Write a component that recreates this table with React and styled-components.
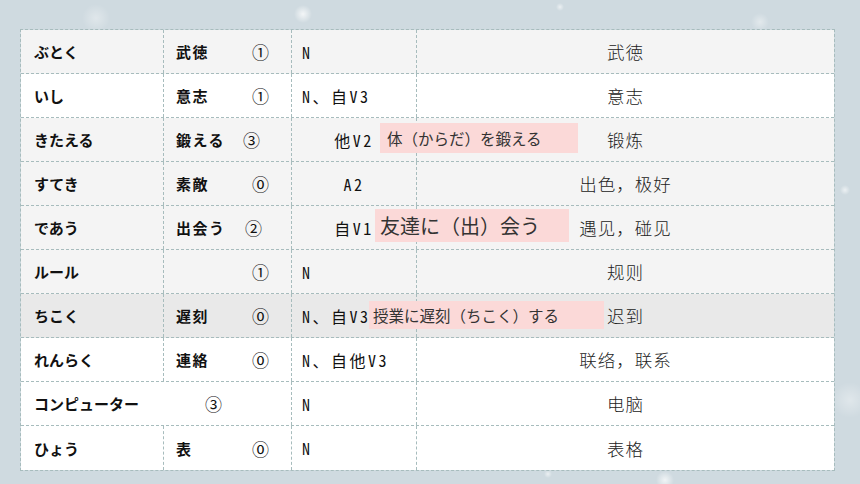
import styled, { createGlobalStyle } from "styled-components";

const GlobalStyle = createGlobalStyle`
  html, body {
    margin: 0;
    padding: 0;
  }
  body {
    width: 860px;
    height: 484px;
    overflow: hidden;
    background-color: #cfdae0;
    background-image:
      radial-gradient(circle at 303px 14px, rgba(255,255,255,0.75) 0, rgba(255,255,255,0) 9px),
      radial-gradient(circle at 96px 18px, rgba(255,255,255,0.35) 0, rgba(255,255,255,0) 14px),
      radial-gradient(circle at 560px 7px, rgba(255,255,255,0.6) 0, rgba(255,255,255,0) 4px),
      radial-gradient(circle at 760px 22px, rgba(255,255,255,0.4) 0, rgba(255,255,255,0) 9px),
      radial-gradient(circle at 665px 480px, rgba(255,255,255,0.7) 0, rgba(255,255,255,0) 9px),
      radial-gradient(circle at 548px 474px, rgba(255,255,255,0.6) 0, rgba(255,255,255,0) 4px),
      radial-gradient(circle at 850px 400px, rgba(255,255,255,0.35) 0, rgba(255,255,255,0) 18px),
      radial-gradient(circle at 845px 190px, rgba(255,255,255,0.6) 0, rgba(255,255,255,0) 5px);
  }
`;

const rows = [
  { kana: "ぶとく", word: "武徳", accent: "①", pos: "N", meaning: "武徳", bg: "#f4f4f4" },
  { kana: "いし", word: "意志", accent: "①", pos: "N、自V3", meaning: "意志", bg: "#ffffff" },
  {
    kana: "きたえる", word: "鍛える", wordW: 67, accent: "③", pos: "他V2", center: true,
    meaning: "锻炼", bg: "#f4f4f4",
    note: { text: "体（からだ）を鍛える", left: 359, top: 5, w: 198, h: 30, size: 15.5, pad: 7 },
  },
  { kana: "すてき", word: "素敵", accent: "⓪", pos: "A2", center: true, meaning: "出色，极好", bg: "#f4f4f4" },
  {
    kana: "であう", word: "出会う", wordW: 69, accent: "②", pos: "自V1", center: true,
    meaning: "遇见，碰见", bg: "#f4f4f4",
    note: { text: "友達に（出）会う", left: 354, top: 3, w: 194, h: 33, size: 20, pad: 5 },
  },
  { kana: "ルール", word: "", accent: "①", pos: "N", meaning: "规则", bg: "#f4f4f4" },
  {
    kana: "ちこく", word: "遅刻", accent: "⓪", pos: "N、自V3", meaning: "迟到", bg: "#e9e9e9",
    note: { text: "授業に遅刻（ちこく）する", left: 348, top: 7, w: 235, h: 28, size: 15.5, pad: 4 },
  },
  { kana: "れんらく", word: "連絡", accent: "⓪", pos: "N、自他V3", meaning: "联络，联系", bg: "#ffffff" },
  { kana: "コンピューター", span: true, accent: "③", pos: "N", meaning: "电脑", bg: "#ffffff" },
  { kana: "ひょう", word: "表", accent: "⓪", pos: "N", meaning: "表格", bg: "#ffffff" },
];

const App = () => {
  return (
    <>
      <GlobalStyle />
      <Page>
        <Table>
          {rows.map((r, i) => (
            <Row key={i} $bg={r.bg} $last={i === rows.length - 1}>
              {r.span ? (
                <Cell $span={2}>
                  <Kana $w={171}>{r.kana}</Kana>
                  <Accent>{r.accent}</Accent>
                </Cell>
              ) : (
                <>
                  <Cell>
                    <Kana>{r.kana}</Kana>
                  </Cell>
                  <Cell $pad={12}>
                    <Word $w={r.wordW}>{r.word}</Word>
                    <Accent>{r.accent}</Accent>
                  </Cell>
                </>
              )}
              <Cell $pad={10} $center={r.center}>
                <Pos>{r.pos}</Pos>
              </Cell>
              <Cell $center $noBorder>
                <Meaning>{r.meaning}</Meaning>
              </Cell>
              {r.note && (
                <Note
                  $left={r.note.left}
                  $top={r.note.top}
                  $w={r.note.w}
                  $h={r.note.h}
                  $size={r.note.size}
                  $pad={r.note.pad}
                >
                  {r.note.text}
                </Note>
              )}
            </Row>
          ))}
        </Table>
      </Page>
    </>
  );
};
export default App;

const line = "#a7bcbd";

const Page = styled.div`
    width: 860px;
    height: 484px;
    box-sizing: border-box;
    padding: 29px 25px 0 20px;
  `,
  Table = styled.div`
    width: 815px;
    box-sizing: border-box;
    border: 1px dashed ${line};
    display: flex;
    flex-direction: column;
  `,
  Row = styled.div`
    position: relative;
    display: grid;
    grid-template-columns: 143px 128px 125px 1fr;
    height: 44px;
    box-sizing: border-box;
    background: ${(p) => p.$bg};
    border-bottom: ${(p) => (p.$last ? "none" : `1px dashed ${line}`)};
  `,
  Cell = styled.div`
    grid-column: span ${(p) => p.$span || 1};
    display: flex;
    align-items: center;
    justify-content: ${(p) => (p.$center ? "center" : "flex-start")};
    box-sizing: border-box;
    padding-left: ${(p) => (p.$center ? 0 : p.$pad ?? 13)}px;
    border-right: ${(p) => (p.$noBorder ? "none" : `1px dashed ${line}`)};
    min-width: 0;
  `,
  Kana = styled.span`
    display: inline-block;
    width: ${(p) => (p.$w ? `${p.$w}px` : "auto")};
    font-family: "Noto Sans CJK JP", sans-serif;
    font-weight: 700;
    font-size: 15px;
    color: #111;
    white-space: nowrap;
  `,
  Word = styled.span`
    display: inline-block;
    width: ${(p) => p.$w || 76}px;
    font-family: "Noto Sans CJK JP", sans-serif;
    font-weight: 700;
    font-size: 15px;
    letter-spacing: 1.5px;
    color: #111;
    white-space: nowrap;
  `,
  Accent = styled.span`
    font-family: "Noto Sans CJK JP", sans-serif;
    font-size: 17px;
    color: #111;
    line-height: 1;
  `,
  Pos = styled.span`
    font-family: "Noto Sans CJK JP", sans-serif;
    font-feature-settings: "hwid";
    font-weight: 400;
    font-size: 16px;
    letter-spacing: 2.5px;
    color: #111;
    white-space: nowrap;
  `,
  Meaning = styled.span`
    font-family: "Noto Sans CJK SC", sans-serif;
    font-weight: 300;
    font-size: 17.5px;
    letter-spacing: 1px;
    color: #222;
    white-space: nowrap;
  `,
  Note = styled.div`
    position: absolute;
    left: ${(p) => p.$left}px;
    top: ${(p) => p.$top}px;
    width: ${(p) => p.$w}px;
    height: ${(p) => p.$h}px;
    box-sizing: border-box;
    padding-left: ${(p) => p.$pad}px;
    display: flex;
    align-items: center;
    background: #fbd9d8;
    font-family: "Noto Sans CJK JP", sans-serif;
    font-size: ${(p) => p.$size}px;
    color: #333;
    white-space: nowrap;
  `;
